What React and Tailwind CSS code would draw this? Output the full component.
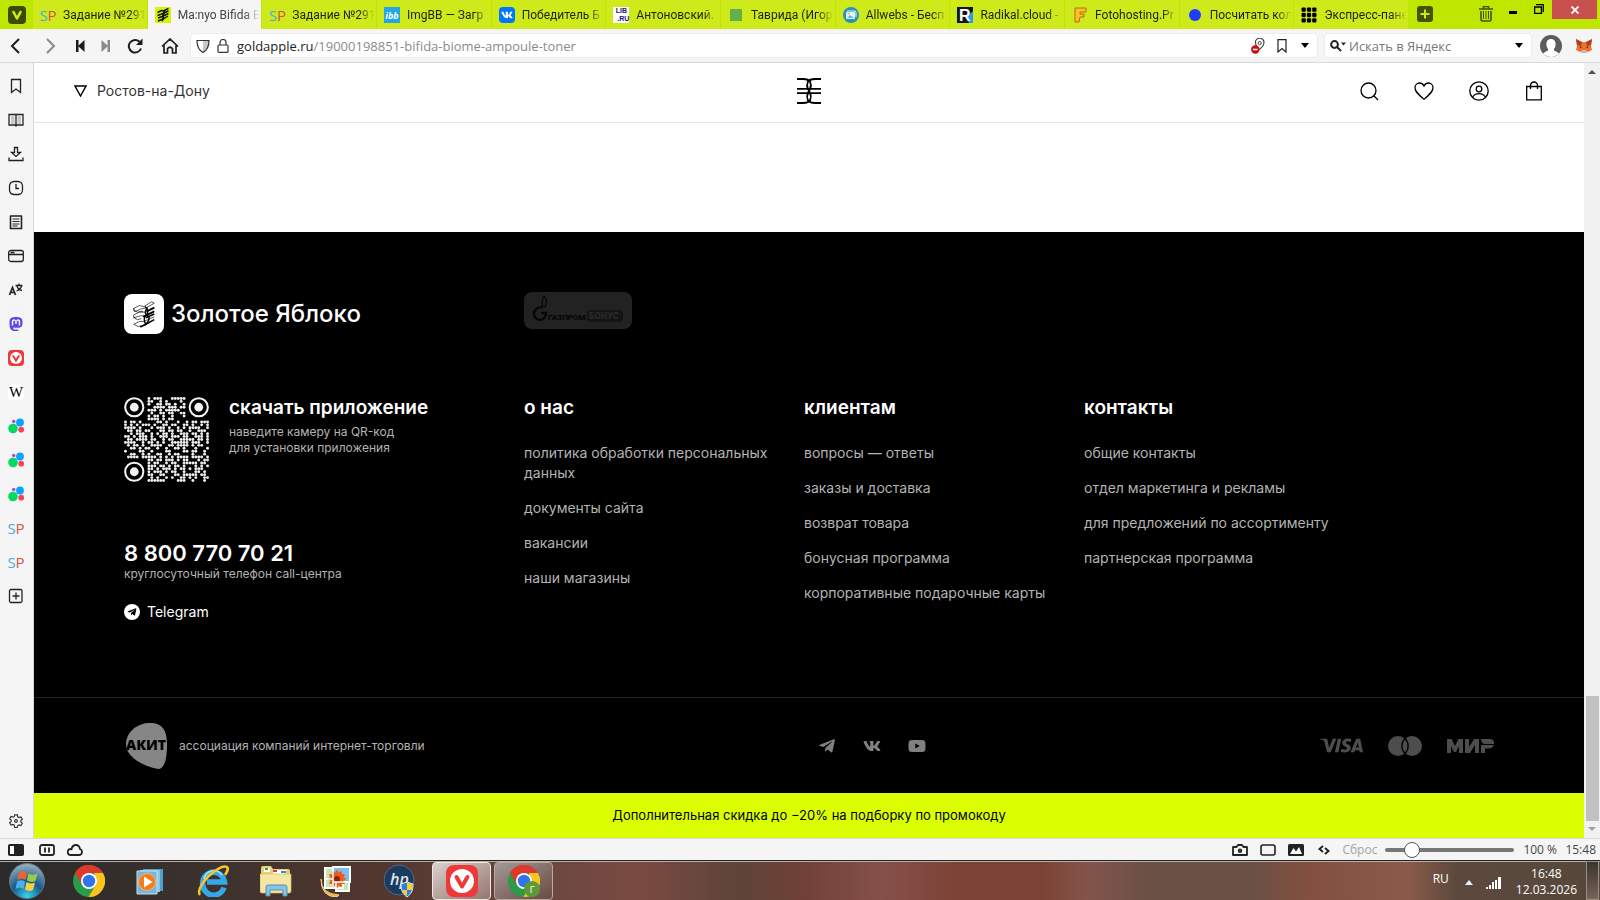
import { useState } from 'react';
import { FaMastodon, FaTelegramPlane, FaVk, FaYoutube } from 'react-icons/fa';
import { SiVisa } from 'react-icons/si';

// ── Data ──────────────────────────────────────────────────────────────────
const TABS = [
  { icon: 'sp', title: 'Задание №291' },
  { icon: 'apple', title: 'Ma:nyo Bifida B', active: true },
  { icon: 'sp', title: 'Задание №291' },
  { icon: 'ibb', title: 'ImgBB — Загр' },
  { icon: 'vk', title: 'Победитель Б' },
  { icon: 'lib', title: 'Антоновский.' },
  { icon: 'green', title: 'Таврида (Игор' },
  { icon: 'allwebs', title: 'Allwebs - Бесп' },
  { icon: 'radikal', title: 'Radikal.cloud -' },
  { icon: 'foto', title: 'Fotohosting.Pr' },
  { icon: 'dot', title: 'Посчитать кол' },
  { icon: 'grid', title: 'Экспресс-пане' },
];

const PANELS = [
  'bookmark', 'reader', 'download', 'history', 'notes', 'window', 'translate', 'mastodon',
  'vivaldi', 'wiki', 'dots', 'dots', 'dots', 'sp', 'sp', 'add',
];

const COLUMNS = [
  {
    title: 'о нас',
    links: ['политика обработки персональных данных', 'документы сайта', 'вакансии', 'наши магазины'],
  },
  {
    title: 'клиентам',
    links: ['вопросы — ответы', 'заказы и доставка', 'возврат товара', 'бонусная программа', 'корпоративные подарочные карты'],
  },
  {
    title: 'контакты',
    links: ['общие контакты', 'отдел маркетинга и рекламы', 'для предложений по ассортименту', 'партнерская программа'],
  },
];

const QR_ROWS = [
  '........x.xxx...xxxxx........',
  '........xx..x.x....x.........',
  '........x..xx.xx.x..x........',
  '..........xxxx.xxx.xx........',
  '........xxx.x.xxxxx..........',
  '.........x..xx.xx..xx........',
  '........x.xx.x..x...x........',
  '........xxxx.x.xx............',
  'x.xx.x.....xx.x...x..x.xx.xxx',
  'x.x.x.xxx.x..xx.xx..xx.x..x.x',
  'xxxx.x...x.xxx.x..x.x.xxxx..x',
  '.xx.xx.xx...xx.xx.xx..x..xxx.',
  '..x.xxx..x.x.xx.x..xxx.xx.x.x',
  'xx.x.xxx.x..xxx.xxx.xx..xxx.x',
  '.xx.xxxx.xx..x.xx..xxxxx.xx.x',
  'xxxx..x.xx.x.x..xxxxxx.xxx..x',
  '.x.xx.x..xxxx..xx.xxxx.x.xx..',
  '..xx.x.xx..x..x..xx.x...x...x',
  'x....xx..x....xx....xx.xx..x.',
  '..xx..x.x..xx..x.xx....x...x.',
  '.xxxx.xxxxx.x.x.x.xxxx.xxxx.x',
  '........xx.xx.xxx.x.xx...x.xx',
  '........x.xx..x.xx..xxxxx.xx.',
  '........xxx.xx.x.xx.x...x.x.x',
  '........xx.x.xxx.x.xx.x.xxx..',
  '........x.xxx.x.xx..x...xx.x.',
  '........xx..xx...xx.xxxxx.xx.',
  '.........x.x..x.x..xx.x.x..xx',
  '........xxxxxx....xxx..x...x.',
];

// ── Small drawings ────────────────────────────────────────────────────────
function Sp() {
  return (
    <span aria-hidden="true" className="flex size-4 shrink-0 items-center justify-center font-['Open_Sans',sans-serif] text-[15px] leading-4">
      <span className="text-[#49aee0]">S</span>
      <span className="text-[#d8514a]">P</span>
    </span>
  );
}

function VivaldiMark({ className }) {
  return (
    <svg viewBox="0 0 32 32" className={className} aria-hidden="true">
      <rect width="32" height="32" rx="8" fill="#ef3939" />
      <circle cx="16" cy="16" r="12" fill="#fff" />
      <path d="M10.500 12l5.500 9.500l5.500-9.500" fill="none" stroke="#ef3939" strokeWidth="4" strokeLinecap="round" strokeLinejoin="round" />
    </svg>
  );
}

function ChromeMark({ className }) {
  return (
    <svg viewBox="0 0 32 32" className={className} aria-hidden="true">
      <circle cx="16" cy="16" r="16" fill="#2a9a4b" />
      <path d="M2.100 8A16 16 0 0 1 29.900 8H16z" fill="#dd3a2e" />
      <path d="M2.100 8A16 16 0 0 1 16 0V16L9 20z" fill="#dd3a2e" />
      <path d="M29.900 8A16 16 0 0 1 15.500 32L23 19.500L21 8z" fill="#fbc31d" />
      <circle cx="16" cy="16" r="8" fill="#fff" />
      <circle cx="16" cy="16" r="6.200" fill="#2f74ea" />
    </svg>
  );
}

function BrandGlyph({ className }) {
  return (
    <svg viewBox="0 0 24 26" className={className} fill="none" stroke="#000" strokeWidth="1.800" aria-hidden="true">
      <path d="M0 1h6c4 0 6 .8 7.200 3 1 2.500 1 4.500 0 6.500L12 13l1.200 2.500c1 2 1 4 0 6.500-1.200 2.200-3.200 3-7.200 3H0" />
      <path d="M24 1h-6c-4 0-6 .8-7.200 3-1 2.500-1 4.500 0 6.500L12 13l-1.200 2.500c-1 2-1 4 0 6.500 1.200 2.200 3.200 3 7.200 3h6" />
      <path d="M0 10.800h24M0 15.200h24" />
    </svg>
  );
}

function StackGlyph({ className }) {
  return (
    <svg viewBox="0 0 24 30" className={className} fill="none" stroke="#000" aria-hidden="true">
      <path d="M1 9l6-3 5 1 8-5 3 1.500-9 5-5 1-7 3z" strokeWidth="0.700" />
      <path d="M1 16l6-3 7 0 9-4M1 19l7-2 6 0 9-4M1 26l6-3 5 0 4-2 7-3" strokeWidth="0.700" />
      <path d="M13 7c4 3 4 7 1 10s-2 6 0 9M16 8c-4 4-3 8 0 9s1 7-3 10" strokeWidth="1.500" />
      <path d="M23 8l-8 4M23 12l-12 6M23 15l-9 4M23 21l-9 5-6 3" strokeWidth="1.700" />
      <path d="M1 26l5 2.500 3-1M1 19l4 2 4-1M1 16v3M1 9v2l4 2 6-1" strokeWidth="0.700" />
    </svg>
  );
}

function Favicon({ kind }) {
  switch (kind) {
    case 'sp':
      return <Sp />;
    case 'apple':
      return (
        <svg viewBox="0 0 16 16" className="size-4 shrink-0">
          <rect width="16" height="16" fill="#d6f500" />
          <path d="M2.500 5.500l4-2 2 .5 5-2.500M2.500 8.500l4-1.500 7-3M3 11l4-1.500 6.500-3M3 14l5-2 5-3" fill="none" stroke="#111" strokeWidth="1.400" />
          <path d="M9 3c2 3-2 4-1 6s0 3-1 5" fill="none" stroke="#111" strokeWidth="1.800" />
        </svg>
      );
    case 'ibb':
      return (
        <svg viewBox="0 0 16 16" className="size-4 shrink-0">
          <rect width="16" height="16" fill="#22a6e6" />
          <text x="8" y="11.500" textAnchor="middle" fontSize="9" fontWeight="700" fontStyle="italic" fontFamily="Open Sans, sans-serif" fill="#fff">ibb</text>
        </svg>
      );
    case 'vk':
      return (
        <span className="flex size-4 shrink-0 items-center justify-center rounded bg-[#0077ff] text-white">
          <FaVk className="size-3" />
        </span>
      );
    case 'lib':
      return (
        <span className="flex size-4 shrink-0 flex-col bg-white font-['Liberation_Sans',sans-serif] text-[7px] font-bold leading-[8px] text-[#15157a]">
          <span>LIB</span>
          <span className="text-right">.RU</span>
        </span>
      );
    case 'green':
      return <span className="m-0.5 size-3 shrink-0 bg-[#63b14e]" />;
    case 'allwebs':
      return (
        <svg viewBox="0 0 16 16" className="size-4 shrink-0">
          <circle cx="8" cy="8" r="8" fill="#2593bd" />
          <rect x="3" y="5" width="9" height="7" rx="1" fill="#e8f7fc" />
          <path d="M4 4h8l1 1v5" fill="none" stroke="#e8f7fc" />
          <path d="M4 11l3-3 4 3z" fill="#58bfe0" />
          <circle cx="5.500" cy="6.500" r="1" fill="#f3a13a" />
        </svg>
      );
    case 'radikal':
      return (
        <svg viewBox="0 0 16 16" className="size-4 shrink-0">
          <rect width="16" height="16" fill="#10151b" />
          <path d="M9 10l7-6v12h-4z" fill="#2e9ae4" />
          <text x="2" y="14" fontSize="16" fontWeight="700" fontFamily="Liberation Sans, sans-serif" fill="#fff">R</text>
        </svg>
      );
    case 'foto':
      return (
        <svg viewBox="0 0 16 16" className="size-4 shrink-0">
          <path d="M3 1h11v4H8v2h4v3H8l-1 5H3z" fill="#ffbe28" stroke="#a8701f" strokeLinejoin="round" />
        </svg>
      );
    case 'dot':
      return <span className="m-0.5 size-3 shrink-0 rounded-full bg-[#1f3dff]" />;
    default:
      return (
        <svg viewBox="0 0 15 15" className="size-4 shrink-0">
          {[0, 5, 10].map((y) => [0, 5, 10].map((x) => (
            <rect key={`${x}-${y}`} x={x + 0.5} y={y + 0.5} width="4" height="4" rx="1" />
          )))}
        </svg>
      );
  }
}

function PanelIcon({ kind }) {
  const line = { fill: 'none', stroke: '#222', strokeWidth: 1.3, className: 'size-4', viewBox: '0 0 16 16' };
  switch (kind) {
    case 'bookmark':
      return <svg {...line}><path d="M3.500 1.500h9v13L8 11l-4.500 3.500z" /></svg>;
    case 'reader':
      return (
        <svg {...line}>
          <path d="M1 2.500h14v10.500H9L8 14l-1-1H1zM8 3v10" />
          <path d="M3 5h3.500M3 7h3.500M3 9h3.500M3 11h3.500M9.500 5H13M9.500 7H13M9.500 9H13M9.500 11H13" strokeWidth="0.700" stroke="#777" />
        </svg>
      );
    case 'download':
      return <svg {...line}><path d="M6.500 1.500h3v5h3L8 10.500l-4.500-4h3zM1 11.500v3h14v-3" /></svg>;
    case 'history':
      return <svg {...line}><rect x="1.500" y="1.500" width="13" height="13" rx="4.500" /><path d="M8 4v4.500h3" /></svg>;
    case 'notes':
      return <svg {...line}><path d="M2.500 2v12.500h11V2M2 2h12" strokeWidth="1.600" /><path d="M4.500 5h7M4.500 7.500h7M4.500 10h7M4.500 12h5" strokeWidth="1" /></svg>;
    case 'window':
      return <svg {...line}><rect x="0.700" y="2.500" width="14.600" height="11" rx="2" /><path d="M1 6.500h14M2.500 4.500h4" /></svg>;
    case 'translate':
      return (
        <svg {...line}>
          <path d="M1.500 13l3-7.500 3 7.500M2.500 10.500h4" strokeWidth="1.700" />
          <path d="M7.500 3.500h7M11 1.500v2M9 4c.5 2 2.500 4 5 4.500M13.500 4c-.5 2-2 4-5 5" />
        </svg>
      );
    case 'mastodon':
      return <FaMastodon className="size-4 text-[#5b4be1]" />;
    case 'vivaldi':
      return <VivaldiMark className="size-4" />;
    case 'wiki':
      return (
        <span className="flex size-4 items-center justify-center rounded-sm bg-white font-['Liberation_Serif',serif] text-[15px] leading-4">W</span>
      );
    case 'dots':
      return (
        <svg viewBox="0 0 16 16" className="size-4">
          <circle cx="5" cy="10.500" r="4.800" fill="#04da5f" />
          <circle cx="12" cy="4.500" r="3.900" fill="#0aa2ff" />
          <circle cx="13.200" cy="11.700" r="2.900" fill="#ff3f55" />
          <circle cx="5.700" cy="3.500" r="1.800" fill="#9a58e0" />
        </svg>
      );
    case 'sp':
      return <Sp />;
    default:
      return <svg {...line}><rect x="1.500" y="1.500" width="12.500" height="13" rx="1.500" /><path d="M8 4.500v7M4.500 8h7" /></svg>;
  }
}

// ── Browser chrome ────────────────────────────────────────────────────────
function TabBar() {
  return (
    <div className="flex h-[29px] bg-[#bee600] font-[Roboto,sans-serif] text-xs text-[#1d2400]">
      <button aria-label="Меню Vivaldi" className="flex w-[33px] items-center justify-center">
        <svg viewBox="0 0 18 18" className="size-[18px]">
          <rect width="18" height="18" rx="4" fill="#3c4a02" />
          <path d="M5.500 6l3.500 6.500L12.500 6" fill="none" stroke="#cfea1a" strokeWidth="2.600" strokeLinecap="round" strokeLinejoin="round" />
        </svg>
      </button>
      <div className="flex min-w-0 flex-1">
        {TABS.map((tab, i) => (
          <button
            key={i}
            className={`flex min-w-0 flex-1 basis-0 items-center gap-[7px] border-r border-[#bee600] pl-[7px] ${
              tab.active ? 'bg-[#f5f5f5] text-[#444]' : 'bg-[#cfea1a]'
            }`}
          >
            <Favicon kind={tab.icon} />
            <span className="min-w-0 flex-1 overflow-hidden whitespace-nowrap pt-px text-left [mask-image:linear-gradient(to_right,black_80%,transparent_98%)]">
              {tab.title}
            </span>
          </button>
        ))}
      </div>
      <div className="flex w-[191px] items-start">
        <button aria-label="Новая вкладка" className="ml-2 mt-1.5">
          <svg viewBox="0 0 16 16" className="size-4">
            <rect width="16" height="16" rx="3" fill="#445300" />
            <path d="M8 3.500v9M3.500 8h9" stroke="#cfea1a" strokeWidth="2" />
          </svg>
        </button>
        <button aria-label="Закрытые вкладки" className="ml-[46px] mt-1.5">
          <svg viewBox="0 0 14 16" className="h-4 w-3.5" fill="none" stroke="#445300">
            <path d="M0 3h14M4.500 2.500v-2h5v2" strokeWidth="1.600" />
            <path d="M2 5v8.500q0 1.500 1.500 1.500h7q1.500 0 1.500-1.500V5" strokeWidth="1.600" />
            <path d="M4.500 5v8M7 5v8M9.500 5v8" />
          </svg>
        </button>
        <button aria-label="Свернуть" className="ml-4 mt-[11px] h-[3px] w-2 bg-black" />
        <button aria-label="Восстановить" className="ml-[17px] mt-1">
          <svg viewBox="0 0 10 10" className="size-2.5" fill="none" stroke="#000">
            <path d="M.5 3h7v6.500h-7z" strokeWidth="1.500" />
            <path d="M2 .7h7.300V8" strokeWidth="1.200" />
          </svg>
        </button>
        <button aria-label="Закрыть" className="ml-auto flex h-[19px] w-[45px] items-center justify-center bg-[#c8504f]">
          <svg viewBox="0 0 8 8" className="size-2" stroke="#fff" strokeWidth="1.800">
            <path d="M.5.5l7 7M7.500.5l-7 7" />
          </svg>
        </button>
        <span className="w-[3px]" />
      </div>
    </div>
  );
}

function Toolbar() {
  return (
    <div className="flex h-[34px] items-center border-b border-[#d8d8d8] bg-[#f5f5f5] text-[#1c1c1c]">
      <div className="flex w-[190px] items-center">
        <button aria-label="Назад" className="ml-2">
          <svg viewBox="0 0 16 16" className="size-4" fill="none" stroke="currentColor" strokeWidth="2"><path d="M11 1L4 8l7 7" /></svg>
        </button>
        <button aria-label="Вперёд" className="ml-[18px] text-[#8a8a8a]">
          <svg viewBox="0 0 16 16" className="size-4" fill="none" stroke="currentColor" strokeWidth="2"><path d="M5 1l7 7-7 7" /></svg>
        </button>
        <button aria-label="В начало" className="ml-[14px]">
          <svg viewBox="0 0 16 16" className="size-4" fill="currentColor"><path d="M4 2h2.500v12H4zM12.500 2v12L6 8z" /></svg>
        </button>
        <button aria-label="В конец" className="ml-2.5 text-[#8a8a8a]">
          <svg viewBox="0 0 16 16" className="size-4" fill="currentColor"><path d="M9.500 2H12v12H9.500zM3.500 2v12L10 8z" /></svg>
        </button>
        <button aria-label="Обновить" className="ml-[13px]">
          <svg viewBox="0 0 16 16" className="size-4" fill="none" stroke="currentColor" strokeWidth="2">
            <path d="M14 10.500A6.300 6.300 0 1 1 12.500 3.700" />
            <path d="M15.500.5v6.500H9z" fill="currentColor" stroke="none" />
          </svg>
        </button>
        <button aria-label="Домой" className="ml-[18px]">
          <svg viewBox="0 0 18 16" className="h-4 w-[18px]" fill="none" stroke="currentColor" strokeWidth="1.700">
            <path d="M1 8.500L9 1l8 7.500M3 7.500V15h3.500v-4.500q2.500-2.500 5 0V15H15V7.500" />
          </svg>
        </button>
      </div>

      <div className="flex h-[25px] min-w-0 flex-1 items-center rounded border border-[#ececec] bg-white pl-[5px] text-[13px]">
        <svg viewBox="0 0 14 14" className="size-3.5" fill="none" stroke="#333" strokeWidth="1.200">
          <path d="M7 1v12c4-2 6-4.500 6-11H7z" fill="#c9c9c9" stroke="none" />
          <path d="M1 1.500h12c0 6-1.500 9.500-6 12-4.500-2.500-6-6-6-12z" />
        </svg>
        <svg viewBox="0 0 12 14" className="ml-[7px] h-3.5 w-3" fill="none" stroke="#333" strokeWidth="1.200">
          <rect x="1" y="6" width="10" height="7.400" rx="1" />
          <path d="M3 6V3.500a3 3 0 0 1 6 0V6" />
        </svg>
        <p className="ml-2 flex-1 truncate pt-0.5 text-[#8b8b8b]">
          <span className="text-[#222]">goldapple.ru</span>/19000198851-bifida-biome-ampoule-toner
        </p>
        <button aria-label="Геолокация запрещена">
          <svg viewBox="0 0 14 16" className="h-4 w-3.5">
            <path d="M5 14c6-4 8-7 8-9.500a4.300 4.300 0 0 0-8.600 0c0 2 .6 3.500 2.600 5.500" fill="none" stroke="#444" strokeWidth="1.200" />
            <circle cx="8.700" cy="5" r="1.600" fill="none" stroke="#444" />
            <circle cx="4.300" cy="11.500" r="4.200" fill="#cf0a0a" />
            <path d="M2 11.500h4.600" stroke="#fff" strokeWidth="1.600" />
          </svg>
        </button>
        <button aria-label="Добавить закладку" className="ml-3">
          <svg viewBox="0 0 10 14" className="h-3.5 w-2.5" fill="none" stroke="#222" strokeWidth="1.200"><path d="M1 .7h8v12.300L5 9.500 1 13z" /></svg>
        </button>
        <button aria-label="История адресов" className="ml-[14px] mr-2">
          <svg viewBox="0 0 8 5" className="h-[5px] w-2"><path d="M0 0h8L4 5z" /></svg>
        </button>
      </div>

      <div className="ml-1.5 flex h-[25px] w-[208px] items-center rounded border border-[#ececec] bg-white pl-[5px] text-[13px]">
        <svg viewBox="0 0 16 12" className="h-3 w-4" fill="none" stroke="#222" strokeWidth="2">
          <circle cx="4.500" cy="4.500" r="3.400" />
          <path d="M7 7l4 4" />
          <path d="M11 2.500h5l-2.500 3z" fill="#222" stroke="none" />
        </svg>
        <input
          aria-label="Поиск"
          placeholder="Искать в Яндекс"
          className="ml-[3px] min-w-0 flex-1 bg-transparent pt-0.5 outline-none placeholder:text-[#777]"
        />
        <button aria-label="Выбрать поисковик" className="mr-2">
          <svg viewBox="0 0 8 5" className="h-[5px] w-2"><path d="M0 0h8L4 5z" /></svg>
        </button>
      </div>

      <button aria-label="Профиль" className="ml-2">
        <svg viewBox="0 0 22 22" className="size-[22px]">
          <circle cx="11" cy="11" r="11" fill="#5c5c5c" />
          <path d="M3 18.500q3-2.500 5-3v-1.500C5.500 11 5.500 4 11 4s5.500 7 3 10v1.500q2 .5 5 3A11 11 0 0 1 3 18.500z" fill="#fff" />
        </svg>
      </button>
      <button aria-label="MetaMask" className="ml-[14px] mr-2">
        <svg viewBox="0 0 16 14" className="h-3.5 w-4">
          <path d="M0 0l6 3h4l6-3-1 7 1 4-4 2-2-1H6l-2 1-4-2 1-4z" fill="#f0702c" />
          <path d="M0 0l6 3-1 4-4-1zM16 0l-6 3 1 4 4-1z" fill="#a8431c" />
          <path d="M6 11h4l1 3H5z" fill="#c9b8ad" />
          <path d="M4 7l2 2H4zM12 7l-2 2h2z" fill="#233447" />
        </svg>
      </button>
    </div>
  );
}

function SidePanel() {
  return (
    <nav aria-label="Панели" className="flex w-[34px] shrink-0 flex-col items-center gap-[18px] border-r border-[#d8d8d8] bg-[#f5f5f5] pr-px pt-[15px]">
      {PANELS.map((kind, i) => (
        <button key={i} aria-label={kind} className="block size-4">
          <PanelIcon kind={kind} />
        </button>
      ))}
      <button aria-label="Настройки" className="mb-2.5 mt-auto">
        <svg viewBox="0 0 16 16" className="size-3.5" fill="none" stroke="#333" strokeWidth="1.300">
          <path d="M6.500 1h3l.5 2.200 1.500.9 2.200-.7 1.500 2.600-1.700 1.500v1.500l1.700 1.500-1.500 2.600-2.200-.7-1.500.9-.5 2.200h-3L6 12.800l-1.500-.9-2.200.7L.8 10l1.700-1.500V7L.8 5.500l1.500-2.600 2.200.7L6 2.900z" />
          <circle cx="8" cy="8" r="1.600" />
        </svg>
      </button>
    </nav>
  );
}

function PageScrollbar() {
  return (
    <div className="flex w-4 shrink-0 flex-col items-center bg-[#f1f1f1] py-[7px]">
      <svg viewBox="0 0 8 4" className="h-1 w-2"><path d="M0 4l4-4 4 4z" fill="#505050" /></svg>
      <div className="mt-auto h-[125px] w-[13px] bg-[#c1c1c1]" />
      <svg viewBox="0 0 8 4" className="mt-1.5 h-1 w-2"><path d="M0 0h8L4 4z" fill="#a0a0a0" /></svg>
    </div>
  );
}

// ── Store page ────────────────────────────────────────────────────────────
function StoreHeader() {
  return (
    <header className="flex h-[60px] items-center border-b border-[#e5e5e5] bg-white pb-1 pl-10 pr-10">
      <button className="flex flex-1 items-center gap-2.5 text-sm text-[#333]">
        <svg viewBox="0 0 13 12" className="h-3 w-[13px]" fill="none" stroke="#000" strokeWidth="1.400"><path d="M1 1h11L6.500 11z" /></svg>
        Ростов-на-Дону
      </button>
      <a href="#home" aria-label="Золотое Яблоко">
        <BrandGlyph className="h-[26px] w-6" />
      </a>
      <div className="flex flex-1 items-center justify-end gap-[35px]">
        <button aria-label="Поиск по сайту">
          <svg viewBox="0 0 20 20" className="size-5" fill="none" stroke="#000" strokeWidth="1.300"><circle cx="9.500" cy="9.500" r="7.500" /><path d="M14.800 14.800L19 19" /></svg>
        </button>
        <button aria-label="Избранное">
          <svg viewBox="0 0 20 20" className="size-5" fill="none" stroke="#000" strokeWidth="1.300">
            <path d="M10 18.300C5 14 1 10.700 1 6.800 1 4 3 2 5.400 2 7.500 2 9.200 3.200 10 5c.8-1.800 2.500-3 4.600-3C17 2 19 4 19 6.800c0 3.900-4 7.200-9 11.500z" />
          </svg>
        </button>
        <button aria-label="Личный кабинет">
          <svg viewBox="0 0 20 20" className="size-5" fill="none" stroke="#000" strokeWidth="1.300">
            <circle cx="10" cy="10" r="9.200" />
            <circle cx="10" cy="8" r="2.800" />
            <path d="M3.500 16.300c1.500-2.600 4-3.600 6.500-3.600s5 1 6.500 3.600" />
          </svg>
        </button>
        <button aria-label="Корзина">
          <svg viewBox="0 0 20 20" className="size-5" fill="none" stroke="#000" strokeWidth="1.300"><path d="M2.700 5.500h14.600v13.300H2.700zM6.500 8V4.500a3.500 3.500 0 0 1 7 0V8" /></svg>
        </button>
      </div>
    </header>
  );
}

function QrCode() {
  return (
    <svg viewBox="0 0 29 29" className="size-[85px] shrink-0" role="img" aria-label="QR-код приложения">
      {QR_ROWS.map((row, y) =>
        [...row].map((c, x) => c === 'x' && <circle key={`${x}-${y}`} cx={x + 0.5} cy={y + 0.5} r="0.500" fill="#eee" />)
      )}
      {[[3.5, 3.5], [25.5, 3.5], [3.5, 25.5]].map(([x, y]) => (
        <g key={`${x}-${y}`}>
          <circle cx={x} cy={y} r="4" fill="#000" />
          <circle cx={x} cy={y} r="3.100" fill="none" stroke="#f2f2f2" strokeWidth="0.700" />
          <circle cx={x} cy={y} r="1.500" fill="#f2f2f2" />
        </g>
      ))}
    </svg>
  );
}

function StoreFooter() {
  return (
    <footer className="bg-black text-[#b3b3b3]">
      <div className="px-[90px] pb-[75px] pt-[60px]">
        <div className="flex">
          <a href="#home" className="flex w-[400px] items-center gap-[7px] pt-0.5 text-white">
            <span className="flex size-10 items-center justify-center rounded-lg bg-white">
              <StackGlyph className="h-7 w-6" />
            </span>
            <span className="text-2xl font-medium">Золотое Яблоко</span>
          </a>
          <a href="#bonus" aria-label="Газпром Бонус" className="h-[37px] w-[108px] rounded-lg bg-[#222]">
            <svg viewBox="0 0 108 37" className="h-[37px] w-[108px]">
              <path d="M20 4c4 5 3 8 1 11l-2-1c-2-3-1-6 1-10z" fill="none" stroke="#070707" strokeWidth="1.300" />
              <path d="M19 15c-6 0-9 3-9 7 0 3 3 6 6 6s6-3 6-7h-5" fill="none" stroke="#070707" strokeWidth="2.500" />
              <text x="24" y="28" fontSize="8" fontWeight="900" fontFamily="Roboto, sans-serif" fill="#050505">ГАЗПРОМ</text>
              <rect x="63" y="18" width="36" height="12" rx="2" fill="#151515" />
              <text x="65" y="27" fontSize="9" fontWeight="900" fontFamily="Roboto, sans-serif" fill="#2a2a2a">БОНУС</text>
            </svg>
          </a>
        </div>

        <div className="flex pt-[63px]">
          <div className="w-[400px] shrink-0">
            <div className="flex gap-5">
              <QrCode />
              <div>
                <h2 className="text-[19px] font-semibold leading-[22px] text-white">скачать приложение</h2>
                <p className="mt-[5px] text-xs leading-4">
                  наведите камеру на QR-код
                  <br />
                  для установки приложения
                </p>
              </div>
            </div>
            <a href="tel:88007707021" className="mt-[59px] block text-[22px] font-semibold leading-6 text-white">8 800 770 70 21</a>
            <p className="mt-px text-xs leading-4">круглосуточный телефон call-центра</p>
            <a href="#telegram" className="mt-5 flex items-center gap-[7px] text-sm text-white">
              <span className="flex size-4 items-center justify-center rounded-full bg-white text-black">
                <FaTelegramPlane className="size-2.5" />
              </span>
              Telegram
            </a>
          </div>

          {COLUMNS.map((col) => (
            <section key={col.title} className="w-[280px] pr-5">
              <h2 className="text-[19px] font-semibold leading-[22px] text-white">{col.title}</h2>
              <ul className="mt-6 flex flex-col gap-[15px] text-sm leading-5">
                {col.links.map((link) => (
                  <li key={link}><a href="#info">{link}</a></li>
                ))}
              </ul>
            </section>
          ))}
        </div>
      </div>

      <div className="flex h-[96px] items-center justify-between border-t border-[#262626] px-[90px]">
        <div className="flex items-center gap-[11px] text-xs">
          <svg viewBox="0 0 44 46" className="h-[46px] w-11" role="img" aria-label="АКИТ">
            <path d="M2 20C3 8 14 0 26 0c13 0 17 8 17 22 0 12-2 23-8 24C25 45 1 36 2 20z" fill="#868686" />
            <text x="2" y="27" fontSize="14" fontWeight="800" fontFamily="Open Sans, sans-serif" fill="#000">АКИТ</text>
          </svg>
          ассоциация компаний интернет-торговли
        </div>
        <div className="flex items-center gap-[27px] text-[#808080]">
          <a href="#tg" aria-label="Telegram"><FaTelegramPlane className="size-[18px]" /></a>
          <a href="#vk" aria-label="ВКонтакте"><FaVk className="size-[18px]" /></a>
          <a href="#yt" aria-label="YouTube"><FaYoutube className="size-[18px]" /></a>
        </div>
        <div className="flex items-center gap-[25px] text-[#4d4d4d]">
          <SiVisa className="size-[43px]" aria-label="Visa" />
          <svg viewBox="0 0 34 20" className="h-5 w-[34px]" role="img" aria-label="Mastercard">
            <circle cx="10" cy="10" r="10" fill="currentColor" />
            <circle cx="24" cy="10" r="10" fill="currentColor" />
            <path d="M17 2.500a10.500 10.500 0 0 1 0 15a10.500 10.500 0 0 1 0-15z" fill="currentColor" stroke="#000" strokeWidth="1.300" />
          </svg>
          <svg viewBox="0 0 47 14" className="h-3.5 w-[47px]" fill="currentColor" role="img" aria-label="Мир">
            <path d="M0 14V0h4.500L8 7l3.500-7H16v14h-4V7l-3 6H7L4 7v7zM18 14V0h4v8l5-8h5v14h-4V6l-5 8zM34 14V6h13c-1 2-3 3.500-5 3.500h-4V14zM34 0h9c3 0 4.500 2 4 5h-9c-2 0-4-2-4-5z" />
          </svg>
        </div>
      </div>
    </footer>
  );
}

// ── Status bar and taskbar ────────────────────────────────────────────────
function StatusBar() {
  const [zoom, setZoom] = useState(100);
  return (
    <div className="flex h-[22px] items-center border-t border-[#d8d8d8] bg-[#f5f5f5] text-xs text-[#444]">
      <button aria-label="Боковая панель" className="ml-2">
        <svg viewBox="0 0 16 12" className="h-3 w-4"><rect width="16" height="12" rx="2" fill="#222" /><rect x="2" y="2" width="4" height="8" fill="#fff" /></svg>
      </button>
      <button aria-label="Приостановить" className="ml-[15px]">
        <svg viewBox="0 0 16 12" className="h-3 w-4" fill="none" stroke="#222" strokeWidth="1.800"><rect x="1" y="1" width="14" height="10" rx="2" /><path d="M6 3.500v5M10 3.500v5" /></svg>
      </button>
      <button aria-label="Синхронизация" className="ml-3">
        <svg viewBox="0 0 16 12" className="h-3 w-4" fill="none" stroke="#222" strokeWidth="1.800"><path d="M4 11a3 3 0 0 1-.5-6l1 .3C5 2.500 7 1 9 1s3.500 1.500 4 4c3 1 2.500 6-1 6z" /></svg>
      </button>
      <div className="ml-auto flex items-center">
        <button aria-label="Снимок экрана">
          <svg viewBox="0 0 16 12" className="h-3 w-4" fill="none" stroke="#222" strokeWidth="1.800"><path d="M1 3h3.500L6 1h4l1.500 2H15v8H1z" strokeLinejoin="round" /><circle cx="8" cy="6.800" r="1.300" /></svg>
        </button>
        <button aria-label="Мозаика" className="ml-3">
          <svg viewBox="0 0 16 12" className="h-3 w-4" fill="none" stroke="#222" strokeWidth="1.600"><rect x="1" y="1" width="14" height="10" rx="2" /></svg>
        </button>
        <button aria-label="Изображения" className="ml-3">
          <svg viewBox="0 0 16 12" className="h-3 w-4"><rect width="16" height="12" rx="1.500" fill="#222" /><path d="M2 10l3.500-6 2.500 3.500L11 3l3 7z" fill="#fff" /></svg>
        </button>
        <button aria-label="Действия" className="ml-[14px]">
          <svg viewBox="0 0 12 10" className="h-2.5 w-3" fill="none" stroke="#222" strokeWidth="2"><path d="M5 1L1.500 4 5 7M7 3l3.500 3L7 9" /></svg>
        </button>
        <button className="ml-3 text-[#a3a3a3]">Сброс</button>
        <input
          type="range"
          aria-label="Масштаб"
          min="20"
          max="500"
          value={zoom}
          onChange={(e) => setZoom(Number(e.target.value))}
          className="ml-2 w-[129px] appearance-none bg-transparent [&::-webkit-slider-runnable-track]:h-1 [&::-webkit-slider-runnable-track]:rounded-full [&::-webkit-slider-runnable-track]:bg-[#777] [&::-webkit-slider-thumb]:-mt-1.5 [&::-webkit-slider-thumb]:size-4 [&::-webkit-slider-thumb]:appearance-none [&::-webkit-slider-thumb]:rounded-full [&::-webkit-slider-thumb]:border [&::-webkit-slider-thumb]:border-[#555] [&::-webkit-slider-thumb]:bg-white"
        />
        <span className="ml-[9px] w-[42px] whitespace-nowrap">{zoom} %</span>
        <span className="mr-1">15:48</span>
      </div>
    </div>
  );
}

function Taskbar() {
  return (
    <div className="flex h-10 items-center border-t border-[#222] bg-[linear-gradient(90deg,#2b2a29_0%,#3a312d_12%,#54382f_25%,#6b4840_34%,#7a4a42_40%,#5e4439_46%,#6f4037_50%,#85504a_55%,#7c4234_60%,#7c4234_65%,#83544c_68%,#6a5045_72%,#6a5045_78%,#83503f_82%,#8a5b4a_88%,#5c493d_91%,#56473b_100%)] text-xs text-white shadow-[inset_0_1px_0_#b9b0aa]">
      <button aria-label="Пуск" className="ml-[9px]">
        <svg viewBox="0 0 36 36" className="size-9">
          <defs>
            <radialGradient id="orb" cx="0.500" cy="0.950" r="0.900">
              <stop offset="0" stopColor="#35d6f5" />
              <stop offset="0.500" stopColor="#17588c" />
              <stop offset="1" stopColor="#93a9b8" />
            </radialGradient>
          </defs>
          <circle cx="18" cy="18" r="17.500" fill="url(#orb)" stroke="#5d7a8c" />
          <path d="M10 10q4-3 8 0l-1.500 7q-4-3-8 0z" fill="#f0622b" />
          <path d="M19.500 10.500q4 2.500 9 0l-2 7.500q-4 2-8.500-.5z" fill="#97cc4b" />
          <path d="M8 18.500q4-2.500 8 0l-1.500 7.500q-4-3-8 0z" fill="#4db0ec" />
          <path d="M17.500 19q4 2.500 8.500.5L24 27q-4 2-8-.5z" fill="#fbd03c" />
        </svg>
      </button>
      <button aria-label="Google Chrome" className="ml-7"><ChromeMark className="size-8" /></button>
      <button aria-label="Проигрыватель" className="ml-[30px]">
        <svg viewBox="0 0 30 30" className="size-[30px]">
          <path d="M8 3h20v22H8z" fill="#4e9fc9" />
          <path d="M5 4h20v22H5z" fill="#8cc8e6" />
          <path d="M2 5h20v23H2z" fill="#79b5d6" stroke="#bfe2f2" />
          <circle cx="12" cy="16" r="8.500" fill="#f07d20" stroke="#fbb36b" />
          <path d="M9 10.500l8.500 5.500L9 21.500z" fill="#fff" />
        </svg>
      </button>
      <button aria-label="Internet Explorer" className="ml-8">
        <svg viewBox="0 0 32 32" className="size-8">
          <path d="M27 22.500A11 11.500 0 1 1 27.500 17H10" fill="none" stroke="#35a9e8" strokeWidth="5.500" />
          <path d="M25 10A10 10 0 0 0 7 14" fill="none" stroke="#a8e4fb" strokeWidth="1.500" />
          <path d="M3 30C-3 22 22-2 30 2c2 2 0 5-2 8" fill="none" stroke="#f7c52b" strokeWidth="2.500" />
        </svg>
      </button>
      <button aria-label="Проводник" className="ml-[31px]">
        <svg viewBox="0 0 32 32" className="size-8">
          <path d="M1 3q0-2 2-2h8l2 3h15q2 0 2 2v22H1z" fill="#e9cf7a" />
          <path d="M4 3h6v4H4zM13 5h13v4H13z" fill="#fff" />
          <path d="M5 3h3v2H5z" fill="#29a33a" />
          <path d="M13 5h4v2h-4z" fill="#d33b2c" />
          <path d="M21 6h5v2h-5z" fill="#2f8ddd" />
          <path d="M0 9h31v17q0 2-2 2H2q-2 0-2-2z" fill="#f6e6a4" stroke="#d9bd63" strokeWidth="0.700" />
          <path d="M6 31V22q0-2 2-2h17q2 0 2 2v9h-4v-6H10v6z" fill="#86c5e3" stroke="#4d93b8" />
        </svg>
      </button>
      <button aria-label="Фотографии" className="ml-7">
        <svg viewBox="0 0 32 32" className="size-8">
          <path d="M1 14q0 15 18 16l-2 2Q1 32 1 14z" fill="#e9b04c" stroke="#f6d28c" />
          <path d="M5 3h18v20H5zM16 8h13v18H16z" fill="#c6e5b0" stroke="#fff" strokeWidth="2" />
          <path d="M13 2h17v15H13z" fill="#78c1ee" stroke="#fff" strokeWidth="2" />
          {[0, 30, 60, 90, 120, 150].map((a) => (
            <ellipse key={a} cx="17" cy="14" rx="9" ry="2.500" transform={`rotate(${a} 17 14)`} fill="#ef5a1b" />
          ))}
          <circle cx="17" cy="14" r="3" fill="#8b2509" />
          <path d="M13 3v14h16M5 14h8v9M16 17v9" fill="none" stroke="#fff" strokeWidth="1.500" />
        </svg>
      </button>
      <button aria-label="HP Support" className="ml-8">
        <svg viewBox="0 0 32 34" className="h-[34px] w-8">
          <circle cx="15" cy="16" r="15" fill="#1c3a5e" stroke="#4d6a88" />
          <text x="6" y="21" fontSize="16" fontWeight="600" fontStyle="italic" fontFamily="Open Sans, sans-serif" fill="#dbe5ee">hp</text>
          <path d="M17 20l6-2 6 2c0 7-2 10-6 13-4-3-6-6-6-13z" fill="#2f80d8" stroke="#e8eef4" />
          <path d="M23 18.500l5.500 2-.5 5.500h-5zM18 26h5v6c-3-2-4.500-4-5-6z" fill="#f7cf35" />
        </svg>
      </button>
      <button aria-label="Vivaldi" className="ml-4 flex h-[38px] w-[59px] items-center justify-center rounded-sm border border-[#efe9e6] bg-linear-to-br from-[#d9d2cf] to-[#94766e]">
        <VivaldiMark className="size-8" />
      </button>
      <button aria-label="Google Chrome, профиль" className="ml-[3px] flex h-[38px] w-[59px] items-center justify-center rounded-sm border border-[#b9a8a2] bg-linear-to-br from-[#a39a97] to-[#694a42]">
        <svg viewBox="0 0 32 32" className="size-8">
          <ChromeMark />
          <circle cx="24" cy="24" r="8" fill="#5d9a35" />
          <text x="24" y="28" textAnchor="middle" fontSize="12" fontFamily="Open Sans, sans-serif" fill="#e6f1dd">г</text>
        </svg>
      </button>

      <div className="ml-auto flex items-center self-stretch">
        <button className="pb-1">RU</button>
        <button aria-label="Скрытые значки" className="ml-4 mt-1">
          <svg viewBox="0 0 8 5" className="h-[5px] w-2"><path d="M0 5l4-5 4 5z" fill="#eef" /></svg>
        </button>
        <button aria-label="Сеть" className="ml-[13px] mt-1">
          <svg viewBox="0 0 15 12" className="h-3 w-[15px]" fill="#fff"><path d="M0 10h2v2H0zM3 8h2v4H3zM6 5h2v7H6zM9 3h2v9H9zM12 0h3v12h-3z" /></svg>
        </button>
        <div className="ml-[15px] pt-0.5 text-center leading-4">
          <p>16:48</p>
          <p>12.03.2026</p>
        </div>
        <button aria-label="Показать рабочий стол" className="ml-[9px] mr-px w-[13px] self-stretch border border-[#9a8d85] bg-linear-to-b from-[#3b3531] to-[#7a6355]" />
      </div>
    </div>
  );
}

export default function App() {
  return (
    <div className="flex min-h-screen flex-col bg-white font-['Open_Sans','Noto_Sans',sans-serif]">
      <TabBar />
      <Toolbar />
      <div className="flex flex-1">
        <SidePanel />
        <div className="flex min-w-0 flex-1 flex-col font-[Inter,'Noto_Sans',sans-serif]">
          <StoreHeader />
          <main className="min-h-[100px] flex-1 bg-white" />
          <StoreFooter />
          <a href="#promo" className="flex h-[45px] items-center justify-center bg-[#dbff00] text-[13px] text-black">
            Дополнительная скидка до −20% на подборку по промокоду
          </a>
        </div>
        <PageScrollbar />
      </div>
      <StatusBar />
      <Taskbar />
    </div>
  );
}
